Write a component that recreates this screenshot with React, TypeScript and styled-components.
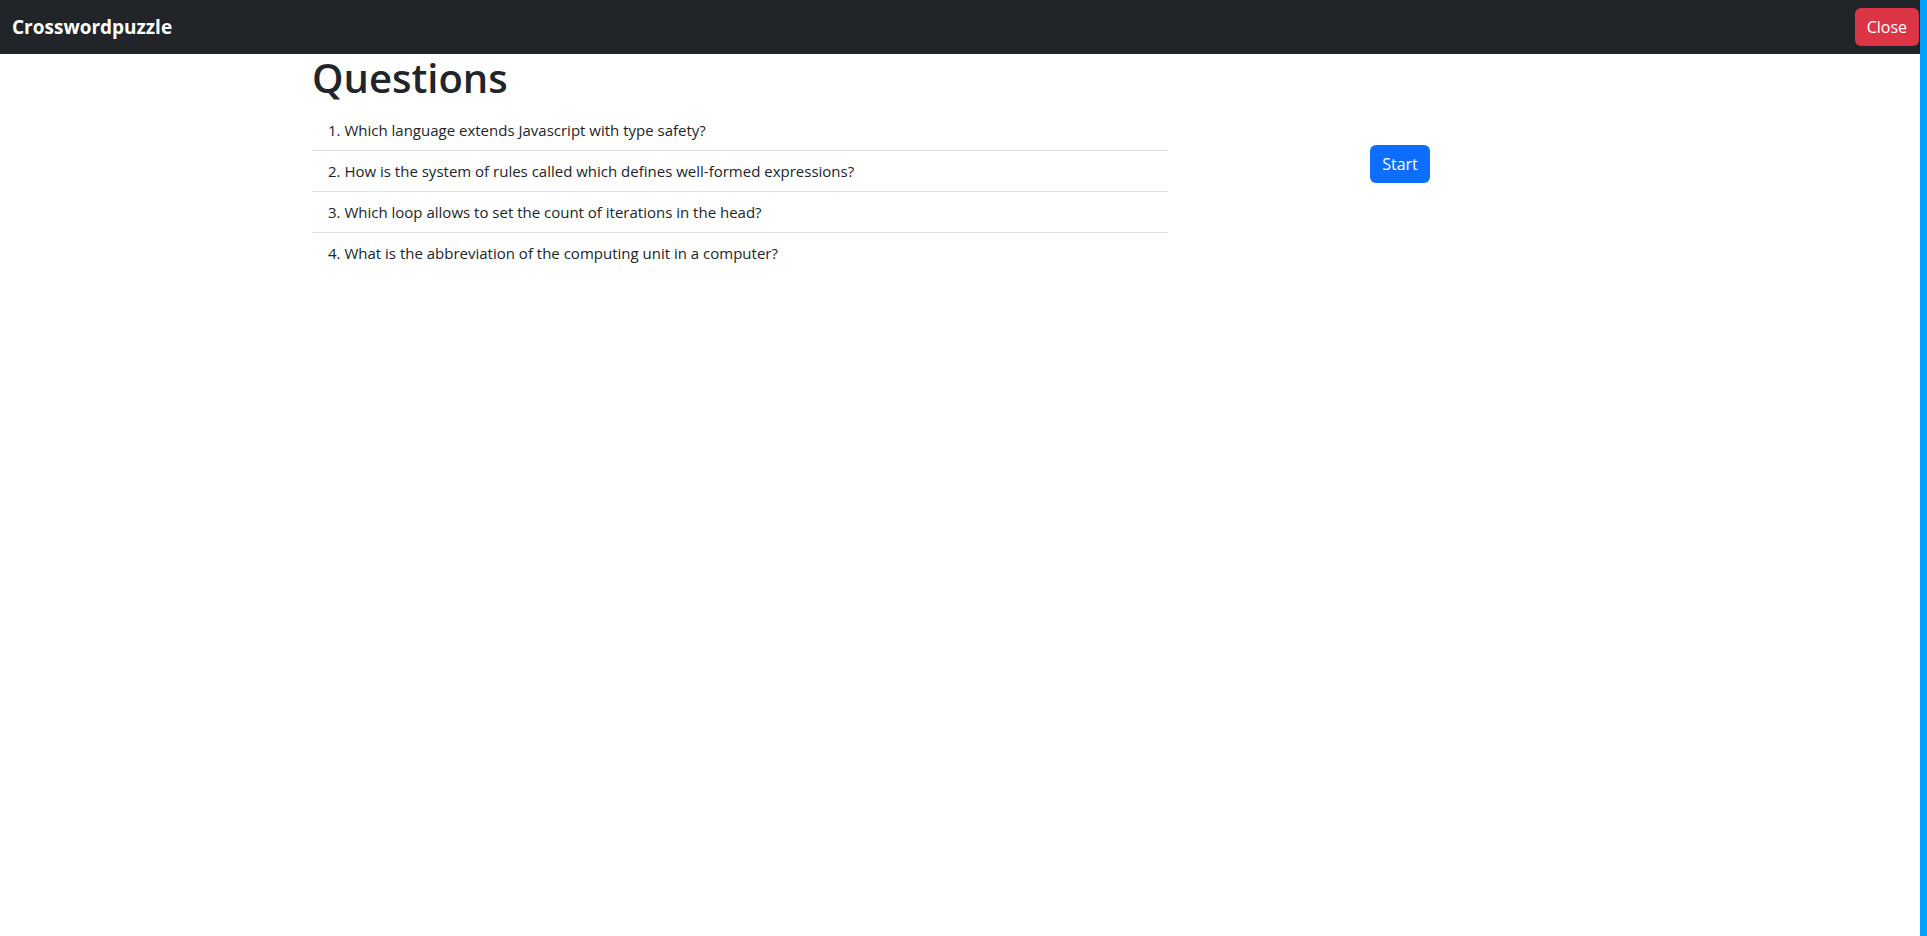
import React from 'react'
import styled, { createGlobalStyle } from 'styled-components'

const Global = createGlobalStyle`
  html, body { margin: 0; padding: 0; }
  body {
    font-family: "Open Sans", "Noto Sans", "Liberation Sans", sans-serif;
    font-size: 16px;
    line-height: 1.5;
    color: #212529;
    background: #fff;
  }
  * { box-sizing: border-box; }
`

const Shell = styled.div`
  display: flex;
  min-height: 936px;
`

const Main = styled.div`
  flex: 1;
  min-width: 0;
`

const Strip = styled.div`
  width: 7px;
  background: #00a2ff;
`

const Navbar = styled.nav`
  display: flex;
  align-items: center;
  justify-content: space-between;
  height: 54px;
  background: #212529;
  padding: 0 1px 0 12px;
`

const Brand = styled.span`
  color: #fff;
  font-size: 19px;
  font-weight: 700;
`

const Button = styled.button<{ $variant: 'danger' | 'primary' }>`
  border: none;
  border-radius: 6px;
  padding: 6px 12px;
  height: 38px;
  font-family: inherit;
  font-size: 16px;
  color: #fff;
  background: ${(p) => (p.$variant === 'danger' ? '#dc3545' : '#0d6efd')};
  cursor: pointer;
`

const Container = styled.div`
  max-width: 1320px;
  margin: 0 auto;
  display: grid;
  grid-template-columns: 8fr 4fr;
`

const Col = styled.div<{ $center?: boolean }>`
  padding: 0 12px;
  display: flex;
  flex-direction: column;
  align-items: ${(p) => (p.$center ? 'center' : 'stretch')};
`

const Heading = styled.h1`
  margin: 0 0 8px;
  font-size: 40px;
  font-weight: 600;
  line-height: 1.2;
`

const List = styled.ol`
  margin: 0;
  padding: 0;
  list-style: none;
`

const Item = styled.li`
  padding: 8px 16px;
  font-size: 15px;
  line-height: 24px;
  border-bottom: 1px solid #dee2e6;
  &:last-child { border-bottom: none; }
`

const StartWrap = styled.div`
  margin-top: 91px;
`

const questions = [
  'Which language extends Javascript with type safety?',
  'How is the system of rules called which defines well-formed expressions?',
  'Which loop allows to set the count of iterations in the head?',
  'What is the abbreviation of the computing unit in a computer?',
]

export default function App() {
  return (
    <>
      <Global />
      <Shell>
        <Main>
          <Navbar>
            <Brand>Crosswordpuzzle</Brand>
            <Button $variant="danger">Close</Button>
          </Navbar>
          <Container>
            <Col>
              <Heading>Questions</Heading>
              <List>
                {questions.map((q, i) => (
                  <Item key={q}>
                    {i + 1}. {q}
                  </Item>
                ))}
              </List>
            </Col>
            <Col $center>
              <StartWrap>
                <Button $variant="primary">Start</Button>
              </StartWrap>
            </Col>
          </Container>
        </Main>
        <Strip />
      </Shell>
    </>
  )
}
